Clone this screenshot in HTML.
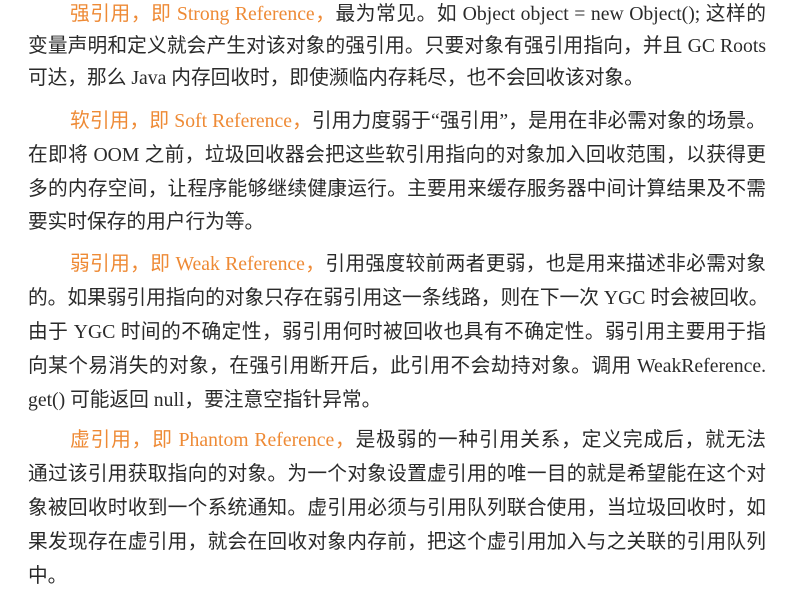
<!DOCTYPE html>
<html><head><meta charset="utf-8"><style>
body{margin:0;width:793px;height:595px;background:#fff;overflow:hidden;position:relative;
font-family:"Liberation Serif","Noto Sans CJK SC",sans-serif;font-size:19.7px;color:#2a2a2a}
.l{position:absolute;left:28px;width:738px;height:24px;line-height:24px;text-align:justify;text-align-last:justify;white-space:nowrap}
.l.f{left:70px;width:696px}
.l.e{text-align-last:left}
.o{color:#ee8a35}
</style></head><body>
<div class="l f" style="top:2px"><span class="o">强引用，即 Strong Reference，</span>最为常见。如 Object object = new Object(); 这样的</div>
<div class="l" style="top:34px">变量声明和定义就会产生对该对象的强引用。只要对象有强引用指向，并且 GC Roots</div>
<div class="l e" style="top:66px">可达，那么 Java 内存回收时，即使濒临内存耗尽，也不会回收该对象。</div>

<div class="l f" style="top:109px"><span class="o">软引用，即 Soft Reference，</span>引用力度弱于“强引用”，是用在非必需对象的场景。</div>
<div class="l" style="top:143px">在即将 OOM 之前，垃圾回收器会把这些软引用指向的对象加入回收范围，以获得更</div>
<div class="l" style="top:177px">多的内存空间，让程序能够继续健康运行。主要用来缓存服务器中间计算结果及不需</div>
<div class="l e" style="top:210px">要实时保存的用户行为等。</div>

<div class="l f" style="top:252px"><span class="o">弱引用，即 Weak Reference，</span>引用强度较前两者更弱，也是用来描述非必需对象</div>
<div class="l" style="top:286px">的。如果弱引用指向的对象只存在弱引用这一条线路，则在下一次 YGC 时会被回收。</div>
<div class="l" style="top:320px">由于 YGC 时间的不确定性，弱引用何时被回收也具有不确定性。弱引用主要用于指</div>
<div class="l" style="top:354px">向某个易消失的对象，在强引用断开后，此引用不会劫持对象。调用 WeakReference.</div>
<div class="l e" style="top:388px">get() 可能返回 null，要注意空指针异常。</div>

<div class="l f" style="top:428px"><span class="o">虚引用，即 Phantom Reference，</span>是极弱的一种引用关系，定义完成后，就无法</div>
<div class="l" style="top:462px">通过该引用获取指向的对象。为一个对象设置虚引用的唯一目的就是希望能在这个对</div>
<div class="l" style="top:496px">象被回收时收到一个系统通知。虚引用必须与引用队列联合使用，当垃圾回收时，如</div>
<div class="l" style="top:530px">果发现存在虚引用，就会在回收对象内存前，把这个虚引用加入与之关联的引用队列</div>
<div class="l e" style="top:564px">中。</div>
</body></html>
